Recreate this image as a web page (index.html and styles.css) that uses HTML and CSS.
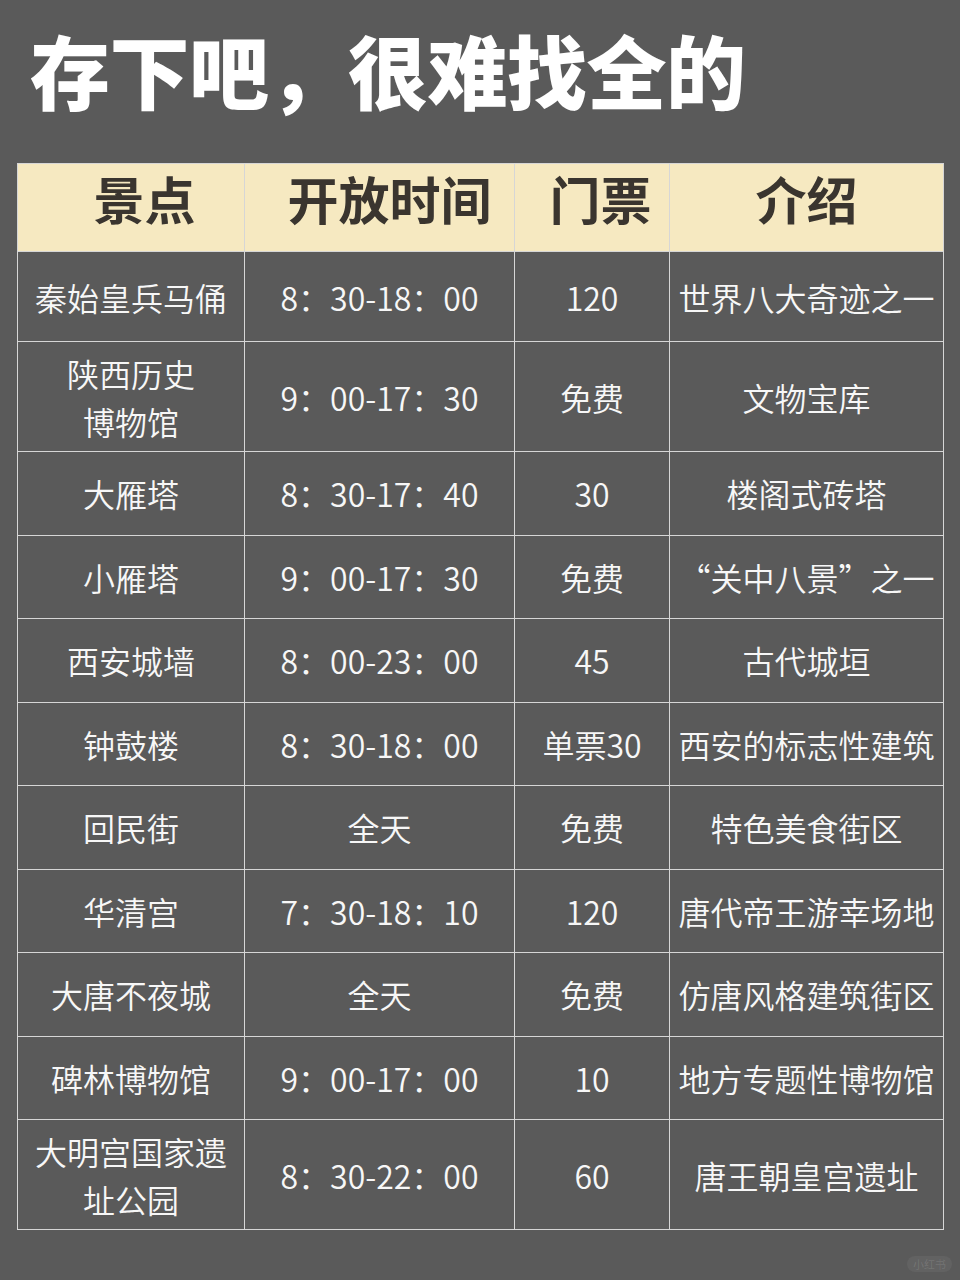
FILE: index.html
```html
<!DOCTYPE html>
<html lang="zh-CN">
<head>
<meta charset="utf-8">
<title>存下吧，很难找全的</title>
<link rel="stylesheet" href="styles.css">
</head>
<body>
<div class="page">
  <h1 class="title">存下吧，很难找全的</h1>
  <table class="grid">
    <colgroup>
      <col class="c1"><col class="c2"><col class="c3"><col class="c4">
    </colgroup>
    <thead>
      <tr class="head">
        <th class="h1">景点</th><th class="h2">开放时间</th><th class="h3">门票</th><th class="h4">介绍</th>
      </tr>
    </thead>
    <tbody>
      <tr class="r-first"><td>秦始皇兵马俑</td><td>8：30-18：00</td><td>120</td><td>世界八大奇迹之一</td></tr>
      <tr class="r-tall"><td>陕西历史<br>博物馆</td><td>9：00-17：30</td><td>免费</td><td>文物宝库</td></tr>
      <tr class="r"><td>大雁塔</td><td>8：30-17：40</td><td>30</td><td>楼阁式砖塔</td></tr>
      <tr class="r"><td>小雁塔</td><td>9：00-17：30</td><td>免费</td><td>“关中八景”之一</td></tr>
      <tr class="r"><td>西安城墙</td><td>8：00-23：00</td><td>45</td><td>古代城垣</td></tr>
      <tr class="r"><td>钟鼓楼</td><td>8：30-18：00</td><td>单票30</td><td>西安的标志性建筑</td></tr>
      <tr class="r"><td>回民街</td><td>全天</td><td>免费</td><td>特色美食街区</td></tr>
      <tr class="r"><td>华清宫</td><td>7：30-18：10</td><td>120</td><td>唐代帝王游幸场地</td></tr>
      <tr class="r"><td>大唐不夜城</td><td>全天</td><td>免费</td><td>仿唐风格建筑街区</td></tr>
      <tr class="r"><td>碑林博物馆</td><td>9：00-17：00</td><td>10</td><td>地方专题性博物馆</td></tr>
      <tr class="r-tall"><td>大明宫国家遗<br>址公园</td><td>8：30-22：00</td><td>60</td><td>唐王朝皇宫遗址</td></tr>
    </tbody>
  </table>
  <div class="mark">小红书</div>
</div>
</body>
</html>
```

FILE: styles.css
```css
html, body {
  margin: 0;
  padding: 0;
  background: #5a5a5a;
}
.page {
  position: relative;
  width: 960px;
  height: 1280px;
  overflow: hidden;
  font-family: "Noto Sans CJK SC", "Noto Sans", sans-serif;
}
.title {
  margin: 0;
  padding: 28px 0 0 30px;
  height: 163px;
  box-sizing: border-box;
  font-size: 80px;
  line-height: 80px;
  font-weight: 900;
  color: #ffffff;
  letter-spacing: -0.5px;
  white-space: nowrap;
}
.grid {
  margin-left: 17px;
  width: 926px;
  border-collapse: collapse;
  table-layout: fixed;
}
.c1 { width: 227px; }
.c2 { width: 270px; }
.c3 { width: 155px; }
.c4 { width: 274px; }
.grid th, .grid td {
  border: 1.5px solid #d6d6d6;
  padding: 0;
  text-align: center;
  vertical-align: middle;
  white-space: nowrap;
}
.head th {
  box-sizing: border-box;
  height: 88px;
  padding-bottom: 18px;
  background: #f6e9c1;
  color: #3a352f;
  font-size: 51px;
  font-weight: 700;
  line-height: 1;
}
.head .h1 { padding-left: 27px; }
.head .h2 { padding-left: 20px; }
.head .h3 { padding-left: 17px; }
.grid td {
  color: #f7f7f7;
  font-size: 32px;
  font-weight: 350;
  line-height: 48px;
}
.r-first td { height: 89px; }
.r td { height: 82.5px; }
.r-tall td { height: 109px; }
.mark {
  position: absolute;
  right: 8px;
  bottom: 8px;
  padding: 1px 6px;
  border-radius: 8px;
  background: rgba(255,255,255,0.05);
  color: rgba(255,255,255,0.12);
  font-size: 11px;
  line-height: 14px;
}
```
